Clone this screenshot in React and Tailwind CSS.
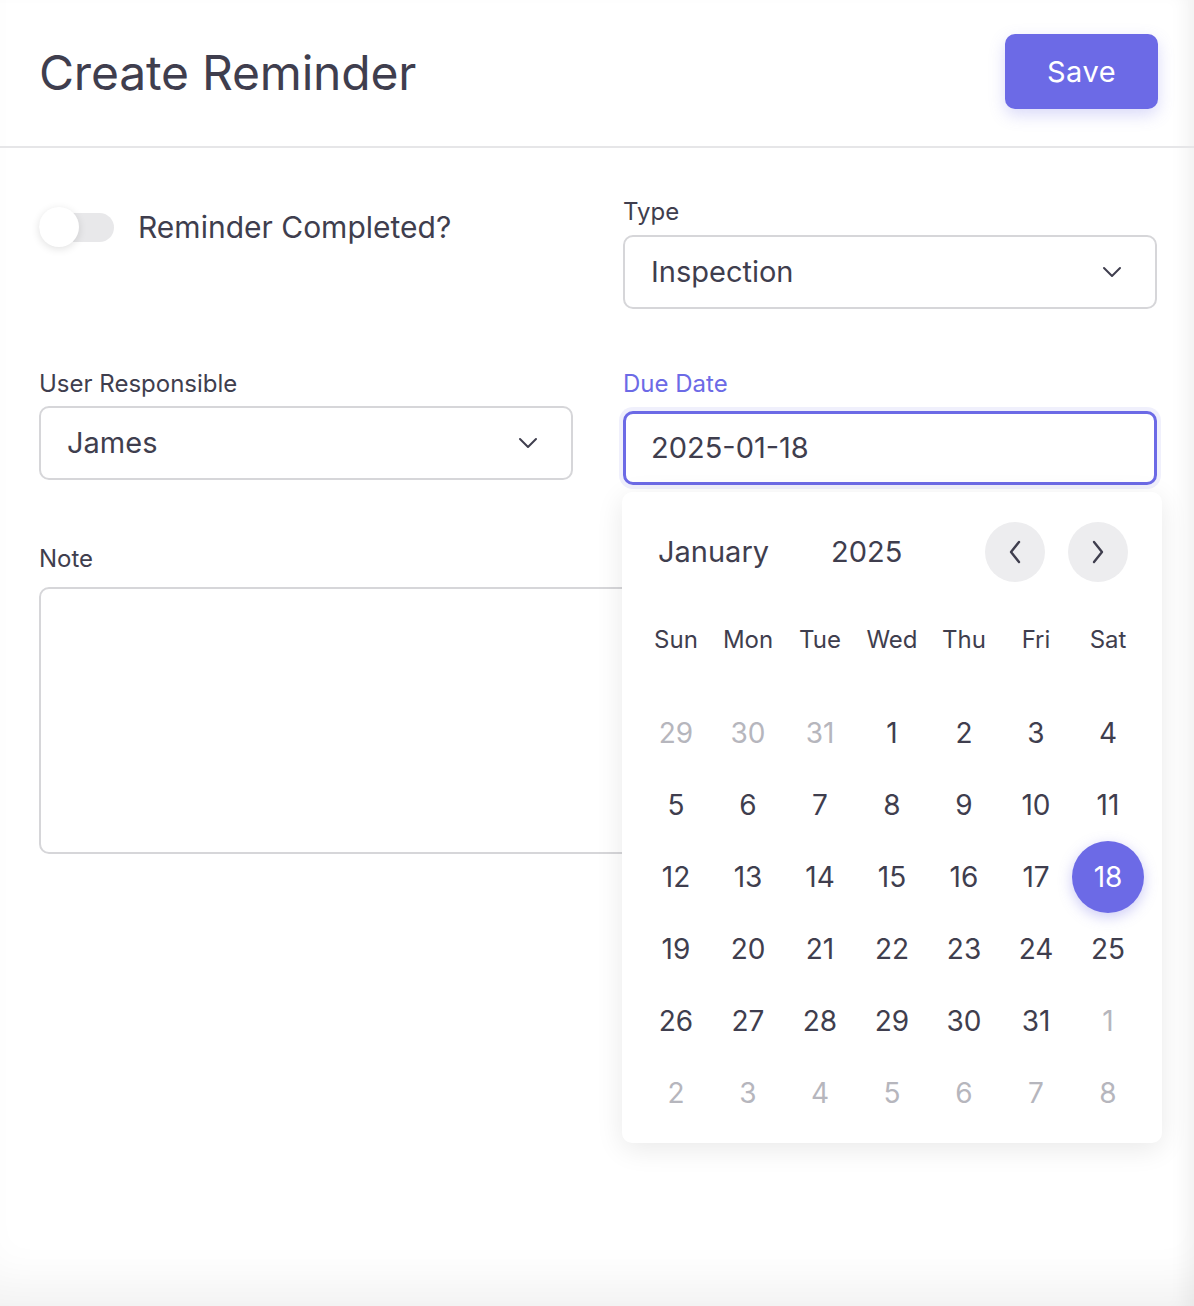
import React, { useState } from "react";

const ink = "text-[#3f3e4e]";

const weeks = [
  [29, 30, 31, 1, 2, 3, 4],
  [5, 6, 7, 8, 9, 10, 11],
  [12, 13, 14, 15, 16, 17, 18],
  [19, 20, 21, 22, 23, 24, 25],
  [26, 27, 28, 29, 30, 31, 1],
  [2, 3, 4, 5, 6, 7, 8],
];
const dayNames = ["Sun", "Mon", "Tue", "Wed", "Thu", "Fri", "Sat"];

const ChevronDown = () => (
  <svg width="20" height="12" viewBox="0 0 20 12" fill="none">
    <polyline points="2,2 10,10 18,2" stroke="#3f3e4e" strokeWidth="2" strokeLinecap="round" strokeLinejoin="round" />
  </svg>
);

const Chevron = ({ dir }) => (
  <svg width="14" height="24" viewBox="0 0 14 24" fill="none">
    <polyline
      points={dir === "left" ? "11,2 3,12 11,22" : "3,2 11,12 3,22"}
      stroke="#3f3e4e"
      strokeWidth="2.4"
      strokeLinecap="round"
      strokeLinejoin="round"
    />
  </svg>
);

function Select({ value }) {
  return (
    <div className="flex h-[74px] items-center justify-between rounded-[10px] border-2 border-[#d6d6d9] bg-white pl-[26px] pr-[33px]">
      <span className={`text-[29px] ${ink}`}>{value}</span>
      <ChevronDown />
    </div>
  );
}

function Calendar({ selected }) {
  return (
    <div className="absolute left-[-1px] top-[calc(100%+7px)] z-10 w-[540px] rounded-[10px] bg-white px-[18px] pb-[14px] pt-[30px] shadow-[0_6px_28px_rgba(0,0,0,0.09)]">
      <div className="flex h-[60px] items-center">
        <span className={`pl-[18px] text-[29px] ${ink}`}>January</span>
        <span className={`ml-[62px] text-[29px] ${ink}`}>2025</span>
        <div className="ml-auto flex gap-[23px] pr-[16px]">
          <button className="flex h-[60px] w-[60px] items-center justify-center rounded-full bg-[#ededef]">
            <Chevron dir="left" />
          </button>
          <button className="flex h-[60px] w-[60px] items-center justify-center rounded-full bg-[#ededef]">
            <Chevron dir="right" />
          </button>
        </div>
      </div>

      <div className="mt-[22px] grid h-[72px] grid-cols-7 items-center">
        {dayNames.map((d) => (
          <span key={d} className={`text-center text-[24px] ${ink}`}>
            {d}
          </span>
        ))}
      </div>

      <div className="mt-[21px]">
        {weeks.map((week, wi) => (
          <div key={wi} className="grid h-[72px] grid-cols-7 items-center">
            {week.map((day, di) => {
              const outside = (wi === 0 && day > 20) || (wi >= 4 && day < 15);
              const isSel = !outside && day === selected;
              return (
                <div key={di} className="flex justify-center">
                  <span
                    className={
                      isSel
                        ? "flex h-[72px] w-[72px] items-center justify-center rounded-full bg-[#6c6ae6] text-[28px] text-white shadow-[0_4px_14px_rgba(108,106,230,0.35)]"
                        : outside
                        ? "text-[28px] text-[#b6b6bd]"
                        : `text-[28px] ${ink}`
                    }
                  >
                    {day}
                  </span>
                </div>
              );
            })}
          </div>
        ))}
      </div>
    </div>
  );
}

export default function App() {
  const [completed, setCompleted] = useState(false);

  return (
    <div className="min-h-[1306px] bg-white font-['Inter',sans-serif] shadow-[inset_-18px_0_18px_-10px_rgba(0,0,0,0.05),inset_0_-50px_50px_-30px_rgba(0,0,0,0.06)]">
      {/* Header */}
      <div className="flex h-[148px] items-center justify-between border-b-2 border-[#e6e6e8] pl-[39px] pr-[36px]">
        <h1 className={`text-[48px] font-normal tracking-[-0.2px] ${ink}`}>Create Reminder</h1>
        <button className="mb-[3px] h-[75px] w-[153px] rounded-[10px] bg-[#6c6ae6] text-[29px] tracking-[0.5px] text-white shadow-[0_6px_16px_rgba(108,106,230,0.25)]">
          Save
        </button>
      </div>

      {/* Form */}
      <div className="pl-[39px] pr-[37px] pt-[45px]">
        <div className="grid grid-cols-2 gap-x-[50px]">
          <div className="pt-[14px]">
            <div className="flex h-[40px] items-center">
              <button
                onClick={() => setCompleted(!completed)}
                className="relative h-[40px] w-[76px]"
              >
                <span className="absolute left-0 top-[6px] h-[29px] w-[75px] rounded-full bg-[#e8e8ea]" />
                <span className="absolute left-0 top-0 h-[40px] w-[40px] rounded-full bg-white shadow-[0_2px_8px_rgba(0,0,0,0.12)]" />
              </button>
              <span className={`ml-[23px] text-[30px] ${ink}`}>Reminder Completed?</span>
            </div>
          </div>
          <div>
            <label className={`block h-[36px] pt-[2px] text-[24px] leading-[34px] ${ink}`}>Type</label>
            <div className="mt-[6px]">
              <Select value="Inspection" />
            </div>
          </div>
        </div>

        <div className="mt-[54px] grid grid-cols-2 gap-x-[50px]">
          <div>
            <label className={`block h-[38px] pt-[4px] text-[24px] leading-[34px] ${ink}`}>User Responsible</label>
            <div className="mt-[5px]">
              <Select value="James" />
            </div>
          </div>
          <div>
            <label className="block h-[38px] pt-[4px] text-[24px] leading-[34px] text-[#6c6ae6]">Due Date</label>
            <div className="relative mt-[10px]">
              <div className="flex h-[74px] items-center rounded-[10px] border-[3px] border-[#6c6ae6] bg-white pl-[25px] shadow-[0_0_0_4px_rgba(108,106,230,0.1)]">
                <span className={`text-[29px] ${ink}`}>2025-01-18</span>
              </div>
              <Calendar selected={18} />
            </div>
          </div>
        </div>

        <div className="mt-[51px]">
          <label className={`block h-[40px] pt-[6px] text-[24px] leading-[34px] ${ink}`}>Note</label>
          <textarea className="mt-[11px] block h-[267px] w-full resize-none rounded-[10px] border-2 border-[#d6d6d9] bg-white outline-none" />
        </div>
      </div>
    </div>
  );
}
